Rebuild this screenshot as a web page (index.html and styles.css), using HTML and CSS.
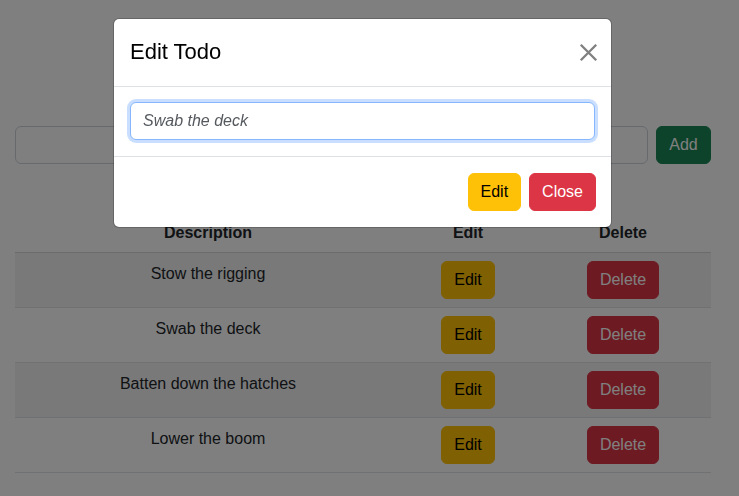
FILE: index.html
```html
<!DOCTYPE html>
<html lang="en">
<head>
<meta charset="utf-8">
<title>Todo</title>
<link rel="stylesheet" href="styles.css">
</head>
<body>
<div class="page">
  <form class="add-row">
    <input class="form-control add-input" type="text">
    <button type="button" class="btn btn-success btn-add">Add</button>
  </form>
  <table class="todo-table">
    <thead>
      <tr><th class="col-desc">Description</th><th class="col-edit">Edit</th><th class="col-del">Delete</th></tr>
    </thead>
    <tbody>
      <tr class="striped"><td>Stow the rigging</td><td><button class="btn btn-warning">Edit</button></td><td><button class="btn btn-danger">Delete</button></td></tr>
      <tr><td>Swab the deck</td><td><button class="btn btn-warning">Edit</button></td><td><button class="btn btn-danger">Delete</button></td></tr>
      <tr class="striped"><td>Batten down the hatches</td><td><button class="btn btn-warning">Edit</button></td><td><button class="btn btn-danger">Delete</button></td></tr>
      <tr><td>Lower the boom</td><td><button class="btn btn-warning">Edit</button></td><td><button class="btn btn-danger">Delete</button></td></tr>
    </tbody>
  </table>
</div>
<div class="backdrop"></div>
<div class="modal">
  <div class="modal-content">
    <div class="modal-header">
      <div class="modal-title">Edit Todo</div>
      <button type="button" class="btn-close" aria-label="Close">
        <svg width="16" height="16" viewBox="0 0 16 16"><path d="M1.5 1.5L14.5 14.5M14.5 1.5L1.5 14.5" stroke="#808080" stroke-width="2" fill="none"/></svg>
      </button>
    </div>
    <div class="modal-body">
      <input class="form-control edit-input" type="text" value="Swab the deck">
    </div>
    <div class="modal-footer">
      <button type="button" class="btn btn-warning">Edit</button>
      <button type="button" class="btn btn-danger">Close</button>
    </div>
  </div>
</div>
</body>
</html>
```
FILE: styles.css
```css
* { box-sizing: border-box; }
html, body { margin: 0; height: 100%; }
body {
  font-family: "Liberation Sans", Arial, sans-serif;
  font-size: 16px;
  line-height: 1.5;
  color: #212529;
  background: #fff;
  overflow: hidden;
}
.page {
  padding: 126px 28px 0 15px;
}
.add-row {
  display: flex;
  gap: 8px;
  margin: 0 0 48px 0;
}
.form-control {
  display: block;
  width: 100%;
  height: 38px;
  padding: 6px 12px;
  font: inherit;
  color: #212529;
  background: #fff;
  border: 1px solid #ced4da;
  border-radius: 6px;
  outline: none;
}
.add-input { flex: 1; }
.btn {
  display: inline-block;
  height: 38px;
  padding: 6px 12px;
  font: inherit;
  line-height: 24px;
  border: 1px solid transparent;
  border-radius: 6px;
  cursor: pointer;
  white-space: nowrap;
}
.btn-add { width: 55px; padding: 6px 0; text-align: center; }
.btn-success { background: #198754; border-color: #198754; color: #fff; }
.btn-warning { background: #ffc107; border-color: #ffc107; color: #000; }
.btn-danger { background: #dc3545; border-color: #dc3545; color: #fff; }

.todo-table {
  width: 696px;
  border-collapse: collapse;
  text-align: center;
}
.todo-table th,
.todo-table td {
  padding: 8px;
  vertical-align: top;
  border-bottom: 1px solid #dee2e6;
}
.todo-table th { font-weight: 700; padding-top: 9px; padding-bottom: 7px; border-bottom-color: #d6d6d6; }
.todo-table td:first-child { padding-top: 9px; padding-bottom: 7px; }
.col-desc { width: 386px; }
.col-edit { width: 134px; }
.col-del { width: 176px; }
.todo-table tr.striped td { background: rgba(0, 0, 0, 0.05); }

.backdrop {
  position: fixed;
  inset: 0;
  background: rgba(0, 0, 0, 0.5);
}
.modal {
  position: fixed;
  inset: 0;
  padding: 18px 0 0 113px;
}
.modal-content {
  width: 499px;
  background: #fff;
  border: 1px solid rgba(0, 0, 0, 0.2);
  border-radius: 6px;
  background-clip: padding-box;
}
.modal-header {
  display: flex;
  align-items: center;
  justify-content: space-between;
  padding: 17px 16px 18px 16px;
  border-bottom: 1px solid #dee2e6;
}
.modal-title {
  font-size: 22px;
  line-height: 30px;
  font-weight: 400;
  color: #000;
}
.btn-close {
  width: 32px;
  height: 32px;
  margin-right: -9px;
  padding: 0;
  border: 0;
  background: transparent;
  display: flex;
  align-items: center;
  justify-content: center;
}
.btn-close svg { width: 19px; height: 19px; }
.modal-body {
  padding: 15px 16px 16px 16px;
}
.edit-input {
  border-color: #86b7fe;
  box-shadow: 0 0 0 3px rgba(13, 110, 253, 0.22);
  font-style: italic;
  color: #55595e;
}
.modal-footer {
  display: flex;
  justify-content: flex-end;
  gap: 8px;
  padding: 16px 15px 16px 15px;
  border-top: 1px solid #dee2e6;
}
```
